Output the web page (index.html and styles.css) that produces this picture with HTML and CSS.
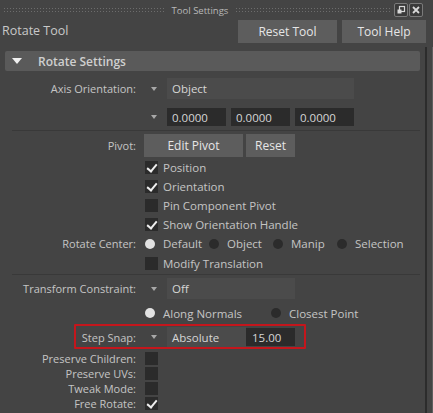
FILE: index.html
```html
<!DOCTYPE html>
<html lang="en">
<head>
    <meta charset="UTF-8">
    <title>Tool Settings</title>
    <link rel="stylesheet" href="styles.css">
</head>
<body>
    <div class="window">
        <!-- Dock title bar -->
        <div class="titlebar">
            <div class="grip grip-left"></div>
            <span class="title">Tool Settings</span>
            <div class="grip grip-right"></div>
            <div class="win-btns">
                <span class="win-btn">
                    <svg width="12" height="12" viewBox="0 0 12 12">
                        <rect x="4.5" y="2.5" width="5" height="5" fill="none" stroke="#d8d8d8" stroke-width="1.2"/>
                        <rect x="2.5" y="5.5" width="4" height="4" fill="#d8d8d8"/>
                    </svg>
                </span>
                <span class="win-btn">
                    <svg width="12" height="12" viewBox="0 0 12 12">
                        <path d="M3 3 L9 9 M9 3 L3 9" stroke="#d8d8d8" stroke-width="1.8"/>
                    </svg>
                </span>
            </div>
        </div>

        <div class="tool-head">
            <span class="tool-name">Rotate Tool</span>
            <div class="head-btns">
                <button class="btn btn-reset-tool">Reset Tool</button>
                <button class="btn btn-help">Tool Help</button>
            </div>
        </div>

        <div class="panel">
            <div class="main">
                <div class="section-header">
                    <span class="caret"></span>
                    Rotate Settings
                </div>

                <div class="section-body">
                    <div class="row row-axis">
                        <span class="label">Axis Orientation:</span>
                        <span class="arrow"></span>
                        <div class="field field-menu field-object">Object</div>
                    </div>
                    <div class="row row-vector">
                        <span class="label"></span>
                        <span class="arrow"></span>
                        <div class="vector">
                            <div class="field field-num">0.0000</div>
                            <div class="field field-num">0.0000</div>
                            <div class="field field-num">0.0000</div>
                        </div>
                    </div>

                    <div class="sep"></div>

                    <div class="row row-pivot">
                        <span class="label">Pivot:</span>
                        <div class="pivot-btns">
                            <button class="btn btn-edit">Edit Pivot</button>
                            <button class="btn btn-reset">Reset</button>
                        </div>
                    </div>
                    <div class="row row-check">
                        <span class="label"></span>
                        <span class="check on"></span><span class="opt-text">Position</span>
                    </div>
                    <div class="row row-check">
                        <span class="label"></span>
                        <span class="check on"></span><span class="opt-text">Orientation</span>
                    </div>
                    <div class="row row-check">
                        <span class="label"></span>
                        <span class="check"></span><span class="opt-text">Pin Component Pivot</span>
                    </div>
                    <div class="row row-check">
                        <span class="label"></span>
                        <span class="check on"></span><span class="opt-text">Show Orientation Handle</span>
                    </div>
                    <div class="row row-check">
                        <span class="label">Rotate Center:</span>
                        <div class="radios">
                            <span class="radio-opt"><span class="radio on"></span>Default</span>
                            <span class="radio-opt"><span class="radio"></span>Object</span>
                            <span class="radio-opt"><span class="radio"></span>Manip</span>
                            <span class="radio-opt"><span class="radio"></span>Selection</span>
                        </div>
                    </div>
                    <div class="row row-check row-modify">
                        <span class="label"></span>
                        <span class="check"></span><span class="opt-text">Modify Translation</span>
                    </div>

                    <div class="sep sep-tight"></div>

                    <div class="row row-constraint">
                        <span class="label">Transform Constraint:</span>
                        <span class="arrow"></span>
                        <div class="field field-menu field-off">Off</div>
                    </div>
                    <div class="row row-along">
                        <span class="label"></span>
                        <div class="radios">
                            <span class="radio-opt radio-wide"><span class="radio on"></span>Along Normals</span>
                            <span class="radio-opt"><span class="radio"></span>Closest Point</span>
                        </div>
                    </div>

                    <div class="row row-snap">
                        <span class="label">Step Snap:</span>
                        <span class="arrow"></span>
                        <div class="field field-menu field-abs">Absolute</div>
                        <div class="field field-num field-step">15.00</div>
                        <div class="highlight"></div>
                    </div>

                    <div class="row row-small row-first">
                        <span class="label">Preserve Children:</span>
                        <span class="check"></span>
                    </div>
                    <div class="row row-small">
                        <span class="label">Preserve UVs:</span>
                        <span class="check"></span>
                    </div>
                    <div class="row row-small">
                        <span class="label">Tweak Mode:</span>
                        <span class="check"></span>
                    </div>
                    <div class="row row-small">
                        <span class="label">Free Rotate:</span>
                        <span class="check on"></span>
                    </div>
                </div>
            </div>
            <div class="edge"></div>
        </div>
    </div>
</body>
</html>
```

FILE: styles.css
```css
* {
    margin: 0;
    padding: 0;
    box-sizing: border-box;
}

body {
    font-family: 'Open Sans', 'Noto Sans', sans-serif;
    font-size: 11px;
    background: #444;
    color: #c4c4c4;
    width: 433px;
    height: 413px;
    overflow: hidden;
}

button {
    font-family: inherit;
    border: none;
    cursor: pointer;
}

/* Title bar */
.titlebar {
    height: 18px;
    display: flex;
    align-items: center;
    padding-left: 3px;
}

.grip {
    height: 5px;
    background-image: radial-gradient(circle, #6c6c6c 0.7px, transparent 0.9px);
    background-size: 3px 3px;
    margin-top: 1px;
}

.grip-left {
    width: 162px;
}

.grip-right {
    width: 156px;
}

.title {
    font-size: 9.5px;
    color: #b8b8b8;
    width: 70px;
    text-align: center;
    margin-top: 2px;
}

.win-btns {
    display: flex;
    gap: 1px;
    margin-left: 3px;
    margin-top: 2px;
}

.win-btn {
    width: 14px;
    height: 14px;
    border: 1px solid #7a7a7a;
    border-radius: 2px;
    background: #3a3a3a;
    display: flex;
    align-items: center;
    justify-content: center;
}

/* Tool name and top buttons */
.tool-head {
    height: 27px;
    display: flex;
    justify-content: space-between;
    padding-left: 2px;
    width: 426px;
}

.tool-name {
    font-size: 12.5px;
    color: #c8c8c8;
    margin-top: 4px;
}

.head-btns {
    display: flex;
    gap: 5px;
    margin-top: 2px;
}

.btn {
    background: #5d5d5d;
    color: #e6e6e6;
    height: 23px;
    font-size: 12px;
}

.btn-reset-tool {
    width: 99px;
}

.btn-help {
    width: 84px;
}

/* Panel with section */
.panel {
    display: flex;
}

.main {
    width: 425px;
    padding-left: 5px;
    padding-top: 6px;
}

.edge {
    width: 8px;
    height: 370px;
    margin-top: 2px;
    border-left: 2px solid #2c2c2c;
    border-right: 1px solid #5e5e5e;
}

.section-header {
    width: 415px;
    height: 20px;
    background: #5a5a5a;
    border-radius: 2px;
    display: flex;
    align-items: center;
    font-weight: 600;
    font-size: 12px;
    color: #cfcfcf;
}

.caret {
    width: 0;
    height: 0;
    border-left: 5px solid transparent;
    border-right: 5px solid transparent;
    border-top: 6px solid #f0f0f0;
    margin-left: 7px;
    margin-right: 16px;
}

.section-body {
    padding-top: 6px;
}

/* Rows */
.row {
    display: flex;
    align-items: center;
    position: relative;
}

.label {
    width: 131px;
    text-align: right;
    margin-right: 9px;
    white-space: nowrap;
}

.arrow {
    width: 22px;
    height: 100%;
    display: flex;
    align-items: center;
}

.arrow::before {
    content: '';
    border-left: 3px solid transparent;
    border-right: 3px solid transparent;
    border-top: 4px solid #a8a8a8;
    margin-left: 6px;
}

.field {
    display: flex;
    align-items: center;
    padding-left: 5px;
    color: #d6d6d6;
    font-size: 11.5px;
}

.field-menu {
    background: #4b4b4b;
    height: 21px;
}

.field-num {
    background: #2b2b2b;
    height: 18px;
    width: 59px;
}

.row-axis {
    height: 23px;
}

.field-object {
    width: 187px;
}

.row-vector {
    height: 20px;
    margin-top: 7px;
}

.vector {
    display: flex;
    gap: 5px;
}

.sep {
    height: 1px;
    background: #393939;
    margin: 3px 5px 3px 7px;
}

.sep-tight {
    margin: 1px 5px 0 7px;
}

.row-pivot {
    height: 23px;
}

.pivot-btns {
    display: flex;
    gap: 3px;
    margin-left: -1px;
}

.btn-edit {
    width: 99px;
}

.btn-reset {
    width: 49px;
}

.row-check {
    height: 19px;
}

.row-pivot + .row-check {
    margin-top: 1px;
}

.row-modify {
    height: 20px;
}

.check {
    width: 13px;
    height: 13px;
    background: #2b2b2b;
    position: relative;
    flex-shrink: 0;
}

.check.on::after {
    content: '';
    position: absolute;
    left: 4px;
    top: 1px;
    width: 4px;
    height: 8px;
    border-right: 2px solid #eee;
    border-bottom: 2px solid #eee;
    transform: rotate(40deg);
}

.opt-text {
    margin-left: 5px;
    font-size: 11.5px;
}

.radios {
    display: flex;
    font-size: 11.5px;
}

.radio-opt {
    width: 64px;
    display: flex;
    align-items: center;
    white-space: nowrap;
}

.radio-wide {
    width: 126px;
}

.radio {
    width: 10px;
    height: 10px;
    border-radius: 50%;
    background: #2b2b2b;
    margin-right: 8px;
    flex-shrink: 0;
}

.radio.on {
    background: #e2e2e2;
}

.row-constraint {
    height: 21px;
    margin-top: 3px;
}

.field-off {
    width: 128px;
}

.row-along {
    height: 28px;
}

.row-snap {
    height: 20px;
}

.field-abs {
    width: 79px;
    height: 20px;
}

.field-step {
    width: 49px;
    padding-left: 6px;
}

/* Annotation frame around the step snap row */
.highlight {
    position: absolute;
    left: 69px;
    top: -3px;
    width: 232px;
    height: 25px;
    border: 2px solid #c4161c;
    border-radius: 1px;
    pointer-events: none;
}

.row-small {
    height: 15px;
}

.row-first {
    margin-top: 4px;
}
```
